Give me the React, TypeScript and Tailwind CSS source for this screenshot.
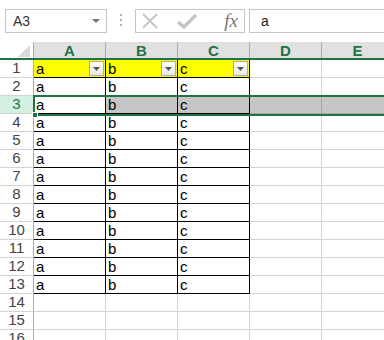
import React from 'react';

const cols = ['A', 'B', 'C', 'D', 'E'];
const rows = Array.from({ length: 16 }, (_, i) => i + 1);
const vals: Record<string, string> = { A: 'a', B: 'b', C: 'c' };

const font = { fontFamily: '"Liberation Sans", Arial, sans-serif' };

function FilterButton() {
    return (
        <span className="mb-[1px] mr-[1px] flex h-[15px] w-[15px] items-center justify-center border border-[#ababab] bg-gradient-to-b from-white to-[#e6e6e6]">
            <svg width="7" height="4" viewBox="0 0 7 4">
                <path d="M0 0h7L3.5 4z" fill="#555" />
            </svg>
        </span>
    );
}

function Cell({ col, row }: { col: string; row: number }) {
    const inTable = row <= 13 && col in vals;
    const selected = row === 3;
    const active = selected && col === 'A';
    const bg = row === 1 && inTable ? 'bg-[#ffff00]' : selected && !active ? 'bg-[#c6c6c6]' : 'bg-white';
    const borders = inTable
        ? 'border-r border-b border-black'
        : selected
            ? 'border-r border-b border-[#a6a6a6]'
            : 'border-r border-b border-[#d4d4d4]';
    return (
        <div className={`flex h-[18px] w-[72px] shrink-0 items-end justify-between pl-[2px] text-[15px] leading-[16px] text-black ${bg} ${borders}`}>
            <span>{inTable ? vals[col] : ''}</span>
            {row === 1 && inTable && <FilterButton />}
        </div>
    );
}

export default function App() {
    return (
        <div className="relative h-[340px] w-[384px] overflow-hidden bg-white" style={font}>
            {/* Formula bar */}
            <div className="flex h-[42px] items-start pt-[9px] pl-[5px]">
                <div className="flex h-[24px] w-[102px] items-center justify-between border border-[#c6c6c6] pl-[7px] pr-[6px] text-[14px] text-[#333]">
                    <span>A3</span>
                    <svg width="8" height="4" viewBox="0 0 8 4">
                        <path d="M0 0h8L4 4z" fill="#777" />
                    </svg>
                </div>
                <div className="ml-[13px] mt-[5px] flex flex-col gap-[3px]">
                    <span className="h-[2px] w-[2px] bg-[#b0b0b0]" />
                    <span className="h-[2px] w-[2px] bg-[#b0b0b0]" />
                    <span className="h-[2px] w-[2px] bg-[#b0b0b0]" />
                </div>
                <div className="ml-[13px] flex h-[24px] w-[110px] items-center border border-[#c6c6c6]">
                    <svg width="18" height="18" viewBox="0 0 18 18" className="ml-[5px]">
                        <path d="M2 2l14 14M16 2L2 16" stroke="#c6c6c6" strokeWidth="2" />
                    </svg>
                    <svg width="20" height="16" viewBox="0 0 20 16" className="ml-[18px]">
                        <path d="M1 9l6 5L19 2" stroke="#c6c6c6" strokeWidth="3.5" fill="none" />
                    </svg>
                    <span className="ml-auto mr-[6px] text-[19px] italic text-[#777]" style={{ fontFamily: '"Liberation Serif", serif' }}>
                        fx
                    </span>
                </div>
                <div className="ml-[4px] flex h-[24px] flex-1 items-center border border-r-0 border-[#c6c6c6] pl-[11px] text-[14px] text-[#222]">
                    a
                </div>
            </div>

            {/* Column headers */}
            <div className="flex h-[18px] border-b-2 border-[#217346]">
                <div className="relative w-[34px] shrink-0 border-r border-[#ababab] bg-white">
                    <svg width="12" height="12" viewBox="0 0 12 12" className="absolute right-[3px] bottom-[1px]">
                        <path d="M12 0v12H0z" fill="#dadada" />
                    </svg>
                </div>
                {cols.map((c) => (
                    <div
                        key={c}
                        className="flex w-[72px] shrink-0 items-center justify-center border-r border-[#ababab] bg-[#e1e1e1] text-[15px] font-bold leading-none text-[#217346]"
                    >
                        {c}
                    </div>
                ))}
            </div>

            {/* Rows */}
            {rows.map((r) => (
                <div key={r} className="flex">
                    <div
                        className={`flex h-[18px] w-[34px] shrink-0 items-center justify-center border-r border-b border-[#d4d4d4] text-[15px] ${
                            r === 3 ? 'bg-[#d3f0e0] text-[#217346]' : 'bg-white text-[#444]'
                        }`}
                        style={{ borderRightColor: '#ababab' }}
                    >
                        {r}
                    </div>
                    {cols.map((c) => (
                        <Cell key={c} col={c} row={r} />
                    ))}
                </div>
            ))}

            {/* Selection outline over row 3 */}
            <div className="pointer-events-none absolute left-[33px] top-[95px] h-[21px] w-[360px] border-2 border-[#217346]" />
            <div className="pointer-events-none absolute left-[32px] top-[112px] h-[6px] w-[6px] border border-white bg-[#217346]" />
        </div>
    );
}
